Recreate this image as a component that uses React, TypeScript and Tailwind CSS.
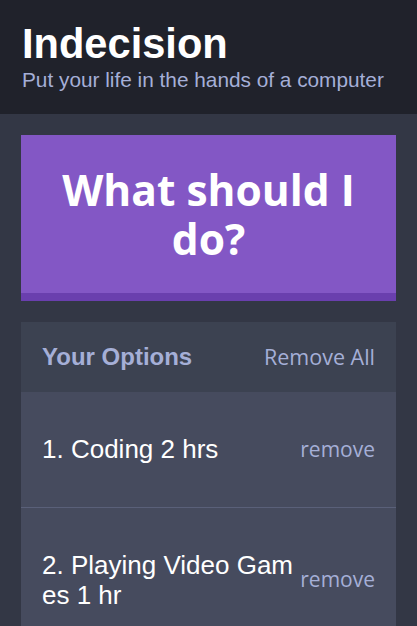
import React from "react";

const options = ["Coding 2 hrs", "Playing Video Games 1 hr"];

export default function App() {
  return (
    <div className="min-h-screen bg-[#333745]" style={{ fontFamily: '"Liberation Sans", Arial, sans-serif' }}>
      <header className="bg-[#20222b] px-[22px] pt-[20px] pb-[22px]">
        <h1 className="text-[41.6px] font-bold text-white leading-[1.15]">Indecision</h1>
        <h2 className="text-[20.8px] text-[#a5afd7] leading-[1.15]">Put your life in the hands of a computer</h2>
      </header>
      <div className="px-[21px] pt-[21px]">
        <button
          className="w-full bg-[#8357c5] border-b-[8px] border-[#6a3fae] py-[30px] px-[10px] text-white font-bold text-[42.5px] leading-[49px] text-center"
          style={{ fontFamily: '"Open Sans", "Noto Sans", sans-serif' }}
        >
          What should I do?
        </button>
        <div className="mt-[21px] bg-[#464b5e]">
          <div className="flex items-center justify-between bg-[#3c4251] h-[70px] px-[21px]">
            <h3 className="text-[24px] font-bold text-[#a5afd7]">Your Options</h3>
            <button
              className="text-[21.5px] text-[#a5afd7]"
              style={{ fontFamily: '"Open Sans", "Noto Sans", sans-serif' }}
            >
              Remove All
            </button>
          </div>
          {options.map((o, i) => (
            <div key={o} className="flex items-center px-[21px] py-[42px] border-b border-[#5a6079]">
              <p className="flex-1 min-w-0 text-[26px] text-white leading-[30px] break-all">
                {i + 1}. {o}
              </p>
              <button
                className="shrink-0 w-[75px] text-right text-[21px] text-[#a5afd7] whitespace-nowrap"
                style={{ fontFamily: '"Open Sans", "Noto Sans", sans-serif' }}
              >
                remove
              </button>
            </div>
          ))}
        </div>
      </div>
    </div>
  );
}
